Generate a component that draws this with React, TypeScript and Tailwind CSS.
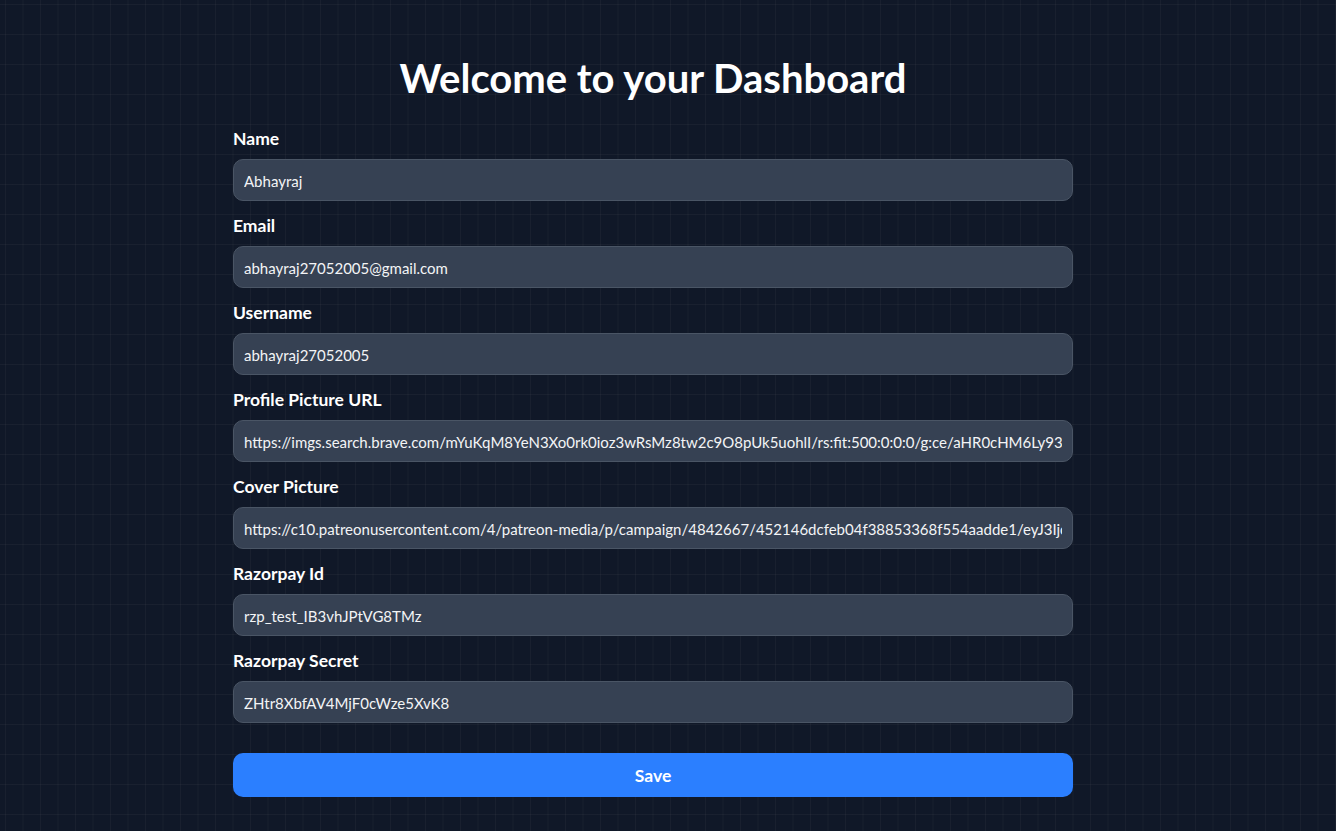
import React, { useState } from 'react';

const fields = [
  { label: 'Name', value: 'Abhayraj' },
  { label: 'Email', value: 'abhayraj27052005@gmail.com' },
  { label: 'Username', value: 'abhayraj27052005' },
  {
    label: 'Profile Picture URL',
    value:
      'https://imgs.search.brave.com/mYuKqM8YeN3Xo0rk0ioz3wRsMz8tw2c9O8pUk5uohlI/rs:fit:500:0:0:0/g:ce/aHR0cHM6Ly93d3cuZnJlZXBpay5jb20vZnJlZS1waG90by9wb3J0cmFpdA',
  },
  {
    label: 'Cover Picture',
    value:
      'https://c10.patreonusercontent.com/4/patreon-media/p/campaign/4842667/452146dcfeb04f38853368f554aadde1/eyJ3IjoxNjAwLCJ3ZSI6MX0%3D/1.png',
  },
  { label: 'Razorpay Id', value: 'rzp_test_IB3vhJPtVG8TMz' },
  { label: 'Razorpay Secret', value: 'ZHtr8XbfAV4MjF0cWze5XvK8' },
];

export default function App() {
  const [values, setValues] = useState(fields.map(f => f.value));

  return (
    <div
      className="min-h-screen w-full bg-[#101828] bg-[linear-gradient(to_right,#80808014_1px,transparent_1px),linear-gradient(to_bottom,#80808014_1px,transparent_1px)] bg-[size:17.5px_30px] bg-[position:5px_4px] text-white pr-[30px] pt-[51px] pb-[40px] font-['Lato',sans-serif]"
    >
      <div className="mx-auto w-[840px]">
        <h1 className="text-center text-[40px] leading-[54px] font-bold mb-[22px]">
          Welcome to your Dashboard
        </h1>

        <form className="flex flex-col gap-[13px]" onSubmit={e => e.preventDefault()}>
          {fields.map((f, i) => (
            <div key={f.label} className="flex flex-col">
              <label className="text-[17.5px] leading-[23px] font-bold mb-[9px]">{f.label}</label>
              <input
                type="text"
                value={values[i]}
                onChange={e => {
                  const next = [...values];
                  next[i] = e.target.value;
                  setValues(next);
                }}
                className="h-[42px] w-full rounded-[10px] border border-[#4a5565] bg-[#364153] px-[10px] pt-[1px] text-[15px] text-gray-100 outline-none"
              />
            </div>
          ))}

          <button
            type="submit"
            className="mt-[17px] h-[44px] w-full rounded-[10px] bg-[#2b7fff] pt-[3px] text-[17.5px] font-bold text-white"
          >
            Save
          </button>
        </form>
      </div>
    </div>
  );
}
